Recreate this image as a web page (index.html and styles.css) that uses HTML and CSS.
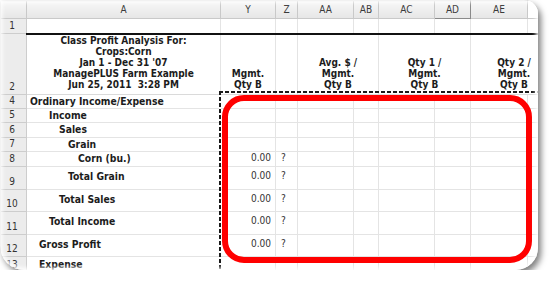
FILE: index.html
```html
<!DOCTYPE html>
<html lang="en">
<head>
    <meta charset="UTF-8">
    <title>Class Profit Analysis</title>
    <link rel="stylesheet" href="styles.css">
</head>
<body>
    <div class="frame">
        <table class="sheet">
            <colgroup>
                <col class="c-num">
                <col class="c-a">
                <col class="c-y">
                <col class="c-z">
                <col class="c-aa">
                <col class="c-ab">
                <col class="c-ac">
                <col class="c-ad">
                <col class="c-ae">
                <col class="c-af">
            </colgroup>
            <thead>
                <tr class="hdr">
                    <th class="corner"></th>
                    <th>A</th>
                    <th>Y</th>
                    <th>Z</th>
                    <th>AA</th>
                    <th>AB</th>
                    <th>AC</th>
                    <th class="hot">AD</th>
                    <th>AE</th>
                    <th class="blank"></th>
                </tr>
            </thead>
            <tbody>
                <tr class="r1">
                    <th class="num">1</th>
                    <td></td><td></td><td></td><td></td><td></td><td></td><td></td><td></td><td></td>
                </tr>
                <tr class="r2">
                    <th class="num">2</th>
                    <td class="title">Class Profit Analysis For:<br>Crops:Corn<br>Jan 1 - Dec 31 '07<br>ManagePLUS Farm Example<br>Jun 25, 2011&nbsp;&nbsp;3:28 PM</td>
                    <td class="colhead">Mgmt.<br>Qty B</td>
                    <td></td>
                    <td class="colhead" colspan="2">Avg. $ /<br>Mgmt.<br>Qty B</td>
                    <td class="colhead" colspan="2">Qty 1 /<br>Mgmt.<br>Qty B</td>
                    <td class="colhead" colspan="2">Qty 2 /<br>Mgmt.<br>Qty B</td>
                </tr>
                <tr class="row">
                    <th class="num">4</th>
                    <td class="lbl i0">Ordinary Income/Expense</td>
                    <td></td><td></td><td></td><td></td><td></td><td></td><td></td><td></td>
                </tr>
                <tr class="row">
                    <th class="num">5</th>
                    <td class="lbl i2">Income</td>
                    <td></td><td></td><td></td><td></td><td></td><td></td><td></td><td></td>
                </tr>
                <tr class="row odd">
                    <th class="num">6</th>
                    <td class="lbl i3">Sales</td>
                    <td></td><td></td><td></td><td></td><td></td><td></td><td></td><td></td>
                </tr>
                <tr class="row">
                    <th class="num">7</th>
                    <td class="lbl i4">Grain</td>
                    <td></td><td></td><td></td><td></td><td></td><td></td><td></td><td></td>
                </tr>
                <tr class="row odd">
                    <th class="num">8</th>
                    <td class="lbl i5">Corn (bu.)</td>
                    <td class="val">0.00</td><td class="q">?</td>
                    <td></td><td></td><td></td><td></td><td></td><td></td>
                </tr>
                <tr class="row tall odd">
                    <th class="num">9</th>
                    <td class="lbl i4">Total Grain</td>
                    <td class="val sum">0.00</td><td class="q">?</td>
                    <td></td><td></td><td></td><td></td><td></td><td></td>
                </tr>
                <tr class="row tall">
                    <th class="num">10</th>
                    <td class="lbl i3">Total Sales</td>
                    <td class="val sum">0.00</td><td class="q">?</td>
                    <td></td><td></td><td></td><td></td><td></td><td></td>
                </tr>
                <tr class="row tall odd">
                    <th class="num">11</th>
                    <td class="lbl i2">Total Income</td>
                    <td class="val sum">0.00</td><td class="q">?</td>
                    <td></td><td></td><td></td><td></td><td></td><td></td>
                </tr>
                <tr class="row tall">
                    <th class="num">12</th>
                    <td class="lbl i1">Gross Profit</td>
                    <td class="val sum">0.00</td><td class="q">?</td>
                    <td></td><td></td><td></td><td></td><td></td><td></td>
                </tr>
                <tr class="row last">
                    <th class="num">13</th>
                    <td class="lbl i1">Expense</td>
                    <td></td><td></td><td></td><td></td><td></td><td></td><td></td><td></td>
                </tr>
            </tbody>
        </table>

        <!-- copy selection around the value block -->
        <div class="ants"></div>
        <!-- highlight ring -->
        <div class="ring"></div>
    </div>
</body>
</html>
```

FILE: styles.css
```css
body {
    margin: 0;
    background: #fff;
}

.frame {
    position: relative;
    width: 538px;
    height: 270px;
    overflow: hidden;
    background: #fff;
    border-radius: 0 14px 22px 24px;
    box-shadow: 3px 4px 6px rgba(0, 0, 0, 0.5);
}

/* soft white edge on the inside of the frame */
.frame::after {
    content: "";
    position: absolute;
    inset: 0;
    border-radius: inherit;
    box-shadow: inset 0 0 4px 2px #fff;
    pointer-events: none;
}

.sheet {
    table-layout: fixed;
    width: 557px;
    border-collapse: collapse;
    font-family: "DejaVu Sans Condensed", "DejaVu Sans", sans-serif;
    font-stretch: condensed;
    font-size: 10px;
    color: #1c1c1c;
}

.c-num { width: 26px; }
.c-a { width: 194px; }
.c-y { width: 55px; }
.c-z { width: 22px; }
.c-aa { width: 56px; }
.c-ab { width: 25px; }
.c-ac { width: 56px; }
.c-ad { width: 36px; }
.c-ae { width: 57px; }
.c-af { width: 30px; }

.sheet td {
    padding: 0;
    border: 1px solid #e4e4e4;
    white-space: nowrap;
    overflow: hidden;
}

/* column letters */
.hdr th {
    height: 17px;
    padding: 0;
    font-weight: normal;
    color: #3a3a3a;
    background: linear-gradient(#f7f7f7, #e6e6e6);
    border: 1px solid #c9c9c9;
}
.hdr .hot {
    border-right-color: #8a8a8a;
    border-bottom-color: #8a8a8a;
}
.hdr .blank {
    background: #fff;
}

/* row numbers */
.num {
    padding: 0 3px 1px 0;
    font-weight: normal;
    color: #333;
    background: #ececec;
    border: 1px solid #cdcdcd;
    vertical-align: bottom;
    text-align: center;
    line-height: 12px;
}

.r1 { height: 15px; }
.r1 td {
    border-bottom: 2px solid #111;
}

.r2 { height: 60px; }
.r2 td {
    vertical-align: bottom;
    text-align: center;
    font-weight: bold;
    line-height: 11px;
    padding-bottom: 4px;
    border-color: #fff #e4e4e4 #dadada;
}

.row { height: 14px; }
.row.odd { height: 15px; }
.row.tall { height: 22px; }
.row.tall.odd { height: 23px; }
.row.last { height: 16px; }
.row td {
    line-height: 12px;
    vertical-align: middle;
    padding-bottom: 1px;
}
.row.tall td {
    padding-bottom: 3px;
}

.lbl {
    font-weight: bold;
    font-size: 10.3px;
}
.i0 { padding-left: 3px !important; }
.i1 { padding-left: 12px !important; }
.i2 { padding-left: 22px !important; }
.i3 { padding-left: 32px !important; }
.i4 { padding-left: 41px !important; }
.i5 { padding-left: 51px !important; }

.val {
    text-align: right;
    padding-right: 4px !important;
    color: #333;
}
.sum {
    border-top: 1px solid #555 !important;
}
.q {
    padding-left: 5px !important;
    color: #333;
}

.ants {
    position: absolute;
    left: 219px;
    top: 91px;
    right: 0;
    bottom: 0;
    background:
        repeating-linear-gradient(to right, #1a1a1a 0 4px, #fff 4px 6px) top left / 100% 2px no-repeat,
        repeating-linear-gradient(to bottom, #1a1a1a 0 4px, #fff 4px 6px) top left / 2px 100% no-repeat;
}

.ring {
    position: absolute;
    left: 222px;
    top: 95px;
    width: 310px;
    height: 168px;
    box-sizing: border-box;
    border: 6px solid #ff0000;
    border-radius: 22px;
}
```
